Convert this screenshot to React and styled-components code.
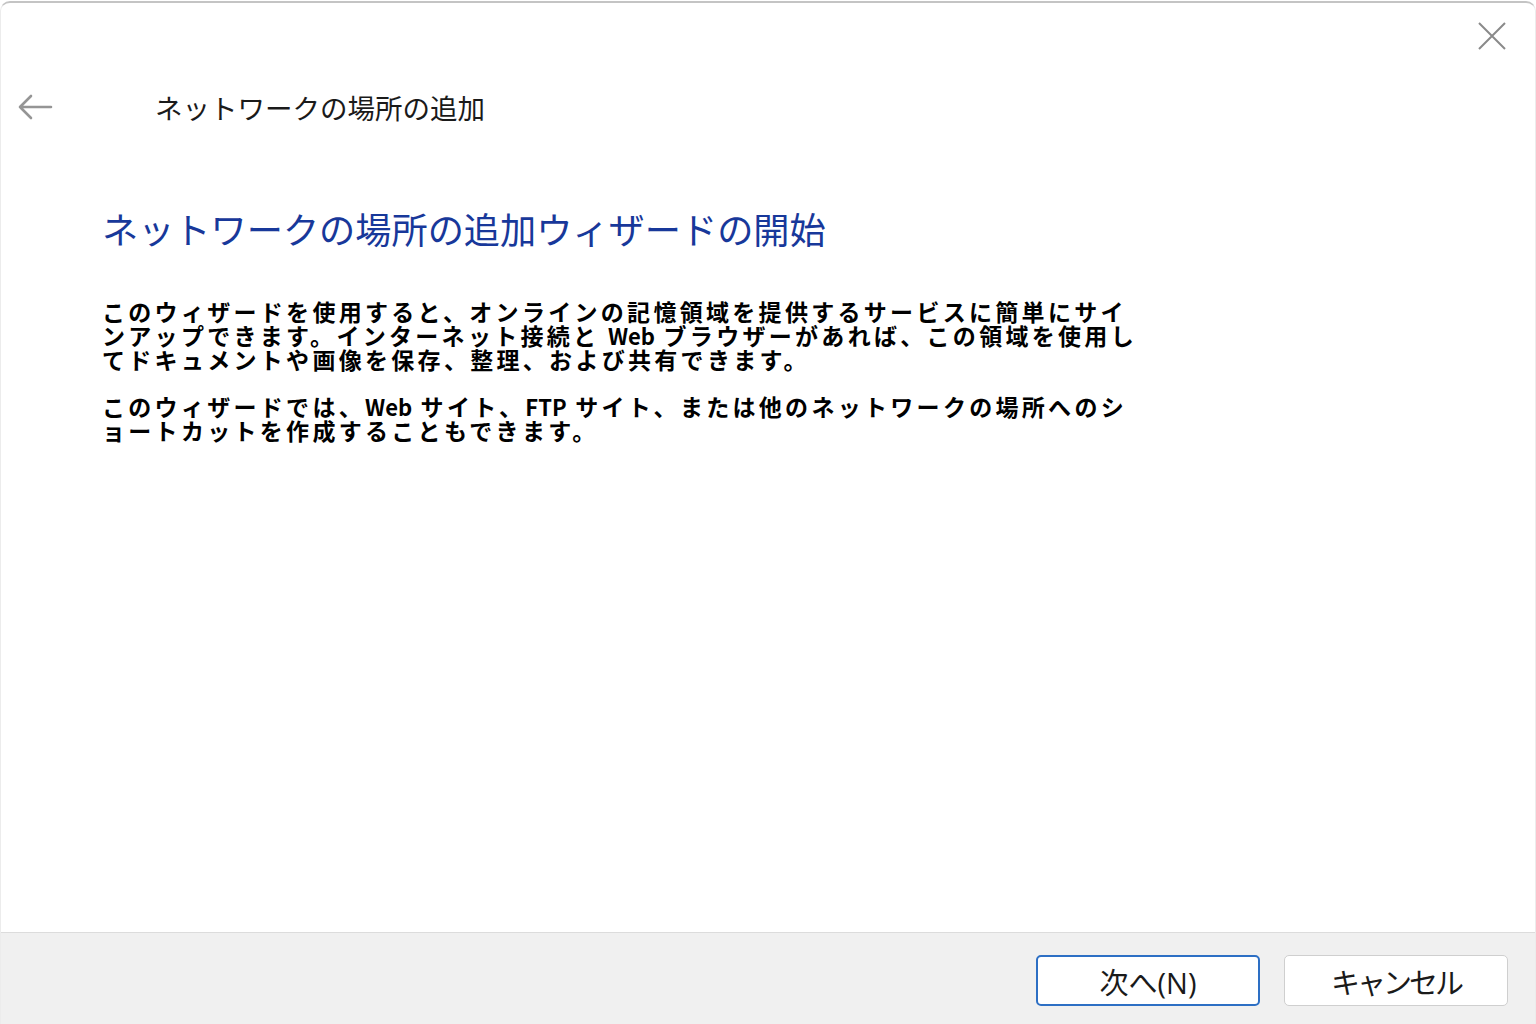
import React from 'react'
import styled, { createGlobalStyle } from 'styled-components'

const GlobalStyle = createGlobalStyle`
  html, body {
    margin: 0;
    padding: 0;
    background: #ffffff;
  }
  body {
    font-family: 'Noto Sans CJK JP', 'Noto Sans', sans-serif;
    color: #1a1a1a;
  }
`

const Window = styled.div`
  position: relative;
  box-sizing: border-box;
  width: 1536px;
  height: 1023px;
  margin-top: 1px;
  display: flex;
  flex-direction: column;
  border-top: 2px solid #c4c4c4;
  border-left: 1px solid #ececec;
  border-right: 1px solid #ececec;
  border-radius: 10px 10px 0 0;
  background: #ffffff;
  overflow: hidden;
`

const TabMark = styled.span`
  position: absolute;
  top: -2px;
  left: ${(p) => p.left}px;
  width: ${(p) => p.width}px;
  height: 2px;
  background: ${(p) => p.color};
`

const TitleBar = styled.div`
  height: 66px;
  display: flex;
  align-items: center;
  justify-content: flex-end;
  padding-right: 28px;
`

const IconButton = styled.button`
  display: flex;
  align-items: center;
  justify-content: center;
  width: 30px;
  height: 30px;
  padding: 0;
  border: none;
  background: transparent;
  color: #8a8a8a;
`

const Header = styled.div`
  height: 76px;
  display: flex;
  align-items: center;
  padding-left: 16px;
  gap: 102px;
`

const HeaderTitle = styled.div`
  font-size: 27.5px;
  line-height: 36px;
  color: #1a1a1a;
`

const Content = styled.div`
  padding-left: 101px;
  flex: 1;
`

const Heading = styled.h1`
  margin: 61px 0 0;
  font-size: 36.2px;
  line-height: 44px;
  font-weight: 400;
  color: #18389a;
`

const Paragraph = styled.p`
  margin: ${(p) => (p.first ? '49px' : '23px')} 0 0;
  font-size: 23px;
  line-height: 24px;
  letter-spacing: 3.3px;
  font-weight: 700;
  color: #000000;
`

const Line = styled.span`
  display: block;
  white-space: nowrap;
`

const Latin = styled.span`
  letter-spacing: 0;
  font-size: 22px;
`

const Footer = styled.div`
  height: 92px;
  box-sizing: border-box;
  border-top: 1px solid #dcdcdc;
  background: #f0f0f0;
  display: flex;
  justify-content: flex-end;
  align-items: flex-start;
  gap: 24px;
  padding: 22px 27px 0 0;
`

const Button = styled.button`
  box-sizing: border-box;
  width: 224px;
  height: 51px;
  border-radius: 5px;
  background: #ffffff;
  border: ${(p) => (p.primary ? '2px solid #2d6fc4' : '1px solid #cfcfcf')};
  font-family: 'Open Sans', 'Noto Sans CJK JP', sans-serif;
  font-size: 29px;
  letter-spacing: ${(p) => (p.primary ? '0' : '-3px')};
  color: #1a1a1a;
  display: flex;
  align-items: center;
  justify-content: center;
  padding: 0;
`

const BackArrow = () => (
  <svg width="36" height="28" viewBox="0 0 36 28" fill="none">
    <path
      d="M34 14H3M14 3L3 14l11 11"
      stroke="#959595"
      strokeWidth="2.6"
      strokeLinecap="round"
      strokeLinejoin="round"
    />
  </svg>
)

const CloseIcon = () => (
  <svg width="30" height="30" viewBox="0 0 30 30" fill="none">
    <path d="M2 2L28 28M28 2L2 28" stroke="#8a8a8a" strokeWidth="2" />
  </svg>
)

const App = () => {
  return (
    <>
      <GlobalStyle />
      <Window>
        <TabMark left={192} width={4} color="#8c8c8c" />
        <TabMark left={930} width={292} color="#a8a8a8" />

        <TitleBar>
          <IconButton aria-label="閉じる">
            <CloseIcon />
          </IconButton>
        </TitleBar>

        <Header>
          <BackArrow />
          <HeaderTitle>ネットワークの場所の追加</HeaderTitle>
        </Header>

        <Content>
          <Heading>ネットワークの場所の追加ウィザードの開始</Heading>

          <Paragraph first>
            <Line>このウィザードを使用すると、オンラインの記憶領域を提供するサービスに簡単にサイ</Line>
            <Line>
              ンアップできます。インターネット接続と <Latin>Web</Latin> ブラウザーがあれば、この領域を使用し
            </Line>
            <Line>てドキュメントや画像を保存、整理、および共有できます。</Line>
          </Paragraph>

          <Paragraph>
            <Line>
              このウィザードでは、<Latin>Web</Latin> サイト、<Latin>FTP</Latin> サイト、または他のネットワークの場所へのシ
            </Line>
            <Line>ョートカットを作成することもできます。</Line>
          </Paragraph>
        </Content>

        <Footer>
          <Button primary>次へ(N)</Button>
          <Button>キャンセル</Button>
        </Footer>
      </Window>
    </>
  )
}

export default App
